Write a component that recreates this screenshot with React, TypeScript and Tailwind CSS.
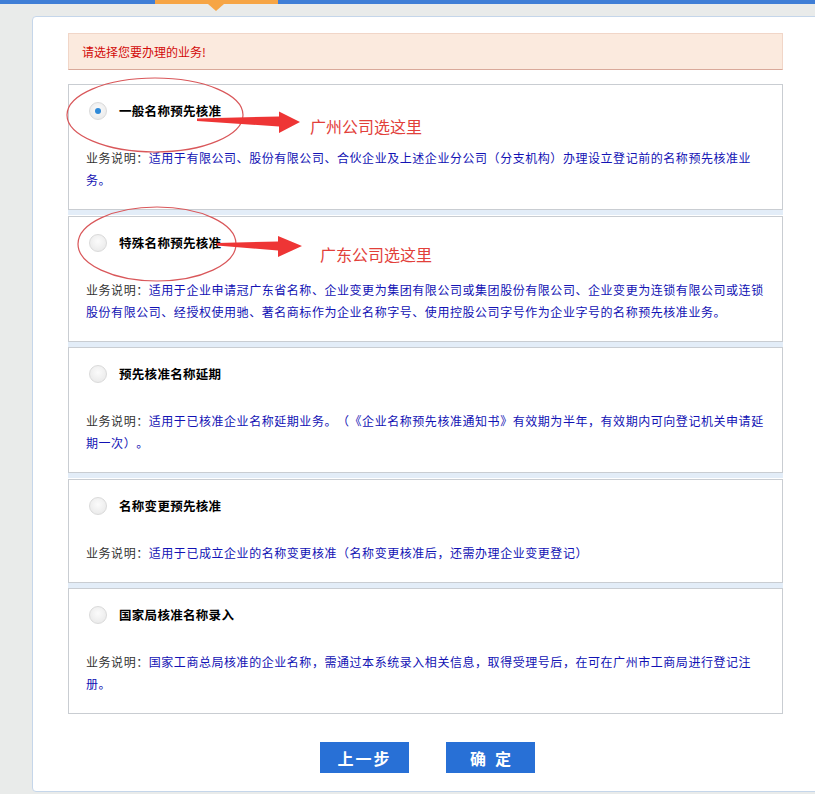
import React from "react";

type Business = {
  title: string;
  desc: string;
  checked?: boolean;
};

const businesses: Business[] = [
  {
    title: "一般名称预先核准",
    desc: "适用于有限公司、股份有限公司、合伙企业及上述企业分公司（分支机构）办理设立登记前的名称预先核准业务。",
    checked: true,
  },
  {
    title: "特殊名称预先核准",
    desc: "适用于企业申请冠广东省名称、企业变更为集团有限公司或集团股份有限公司、企业变更为连锁有限公司或连锁股份有限公司、经授权使用驰、著名商标作为企业名称字号、使用控股公司字号作为企业字号的名称预先核准业务。",
  },
  {
    title: "预先核准名称延期",
    desc: "适用于已核准企业名称延期业务。（《企业名称预先核准通知书》有效期为半年，有效期内可向登记机关申请延期一次）。",
  },
  {
    title: "名称变更预先核准",
    desc: "适用于已成立企业的名称变更核准（名称变更核准后，还需办理企业变更登记）",
  },
  {
    title: "国家局核准名称录入",
    desc: "国家工商总局核准的企业名称，需通过本系统录入相关信息，取得受理号后，在可在广州市工商局进行登记注册。",
  },
];

const Radio = ({ checked }: { checked?: boolean }) => (
  <span className="w-[18px] h-[18px] rounded-full border border-[#dadada] bg-[radial-gradient(circle_at_50%_40%,#fbfbfb,#e6e6e6)] flex items-center justify-center shrink-0">
    {checked && <span className="w-[6px] h-[6px] rounded-full bg-[#2f8ad8]" />}
  </span>
);

const BusinessCard = ({ title, desc, checked }: Business) => (
  <div className="w-[715px] bg-white border border-[#c9cdd2] shadow-[0_5px_0_#e3edf8] last:shadow-none px-[17px] pt-[17px] pb-[18px]">
    {/* Option row */}
    <div className="flex items-center h-[18px] ml-[3px] gap-[12px]">
      <Radio checked={checked} />
      <span className="text-[12.5px] font-bold tracking-[0.3px] text-black leading-[18px]">
        {title}
      </span>
    </div>

    {/* Description */}
    <p className="mt-[27px] w-[684px] text-[12px] leading-[22px] tracking-[0.55px] [text-spacing-trim:space-all]">
      <span className="text-[#333]">业务说明：</span>
      <span className="text-[#1212b4]">{desc}</span>
    </p>
  </div>
);

export default function App() {
  return (
    <div className="relative w-[815px] h-[794px] overflow-hidden bg-[#e9ebea] font-['Noto_Sans_CJK_SC',sans-serif]">
      {/* Top nav strip */}
      <div className="h-[4px] bg-[#3f7ed6] flex">
        <div className="relative ml-[155px] w-[123px] bg-[#f6a545]">
          <span className="absolute left-[53px] top-[4px] w-0 h-0 border-l-[8px] border-r-[8px] border-t-[7px] border-l-transparent border-r-transparent border-t-[#f6a545]" />
        </div>
      </div>

      {/* Panel */}
      <div className="ml-[32px] mt-[12px] w-[800px] bg-white border border-[#c5d6ea] rounded-[4px] pl-[35px] pt-[16px] pb-[18px]">
        <div className="w-[715px] h-[37px] bg-[#fbeade] border border-[#f1d6c8] border-b-[#d9a99a] flex items-center pl-[13px]">
          <span className="text-[12px] text-[#d20a0a]">请选择您要办理的业务!</span>
        </div>

        <div className="mt-[14px] flex flex-col gap-[5.5px]">
          {businesses.map((b) => (
            <BusinessCard key={b.title} {...b} />
          ))}
        </div>

        {/* Actions */}
        <div className="w-[715px] mt-[28px] pl-[4px] flex justify-center gap-[37px]">
          <button className="w-[89px] h-[31px] bg-[#2870d6] text-white text-[16px] font-bold tracking-[2px] flex items-center justify-center">
            上一步
          </button>
          <button className="w-[89px] h-[31px] bg-[#2870d6] text-white text-[16px] font-bold flex items-center justify-center">
            <span className="tracking-[9px] mr-[-9px]">确定</span>
          </button>
        </div>
      </div>

      {/* Red hand-drawn annotations */}
      <svg
        className="absolute inset-0 pointer-events-none"
        width="815"
        height="794"
        viewBox="0 0 815 794"
      >
        <ellipse cx="155" cy="115" rx="88" ry="37" fill="none" stroke="#d9575a" strokeWidth="1.2" />
        <ellipse cx="157" cy="244" rx="79" ry="37" fill="none" stroke="#d9575a" strokeWidth="1.2" />
        <polygon
          points="197,118.5 279,116.5 279,111.5 300,122 279,133 279,126.5 197,121"
          fill="#ee3535"
        />
        <polygon
          points="217,243 278,241.5 278,236 302,246 278,257 278,250.5 217,245.5"
          fill="#ee3535"
        />
      </svg>
      <span className="absolute left-[310px] top-[115px] text-[16px] leading-[22px] text-[#e2403a]">
        广州公司选这里
      </span>
      <span className="absolute left-[320px] top-[243px] text-[16px] leading-[22px] text-[#e2403a]">
        广东公司选这里
      </span>
    </div>
  );
}
